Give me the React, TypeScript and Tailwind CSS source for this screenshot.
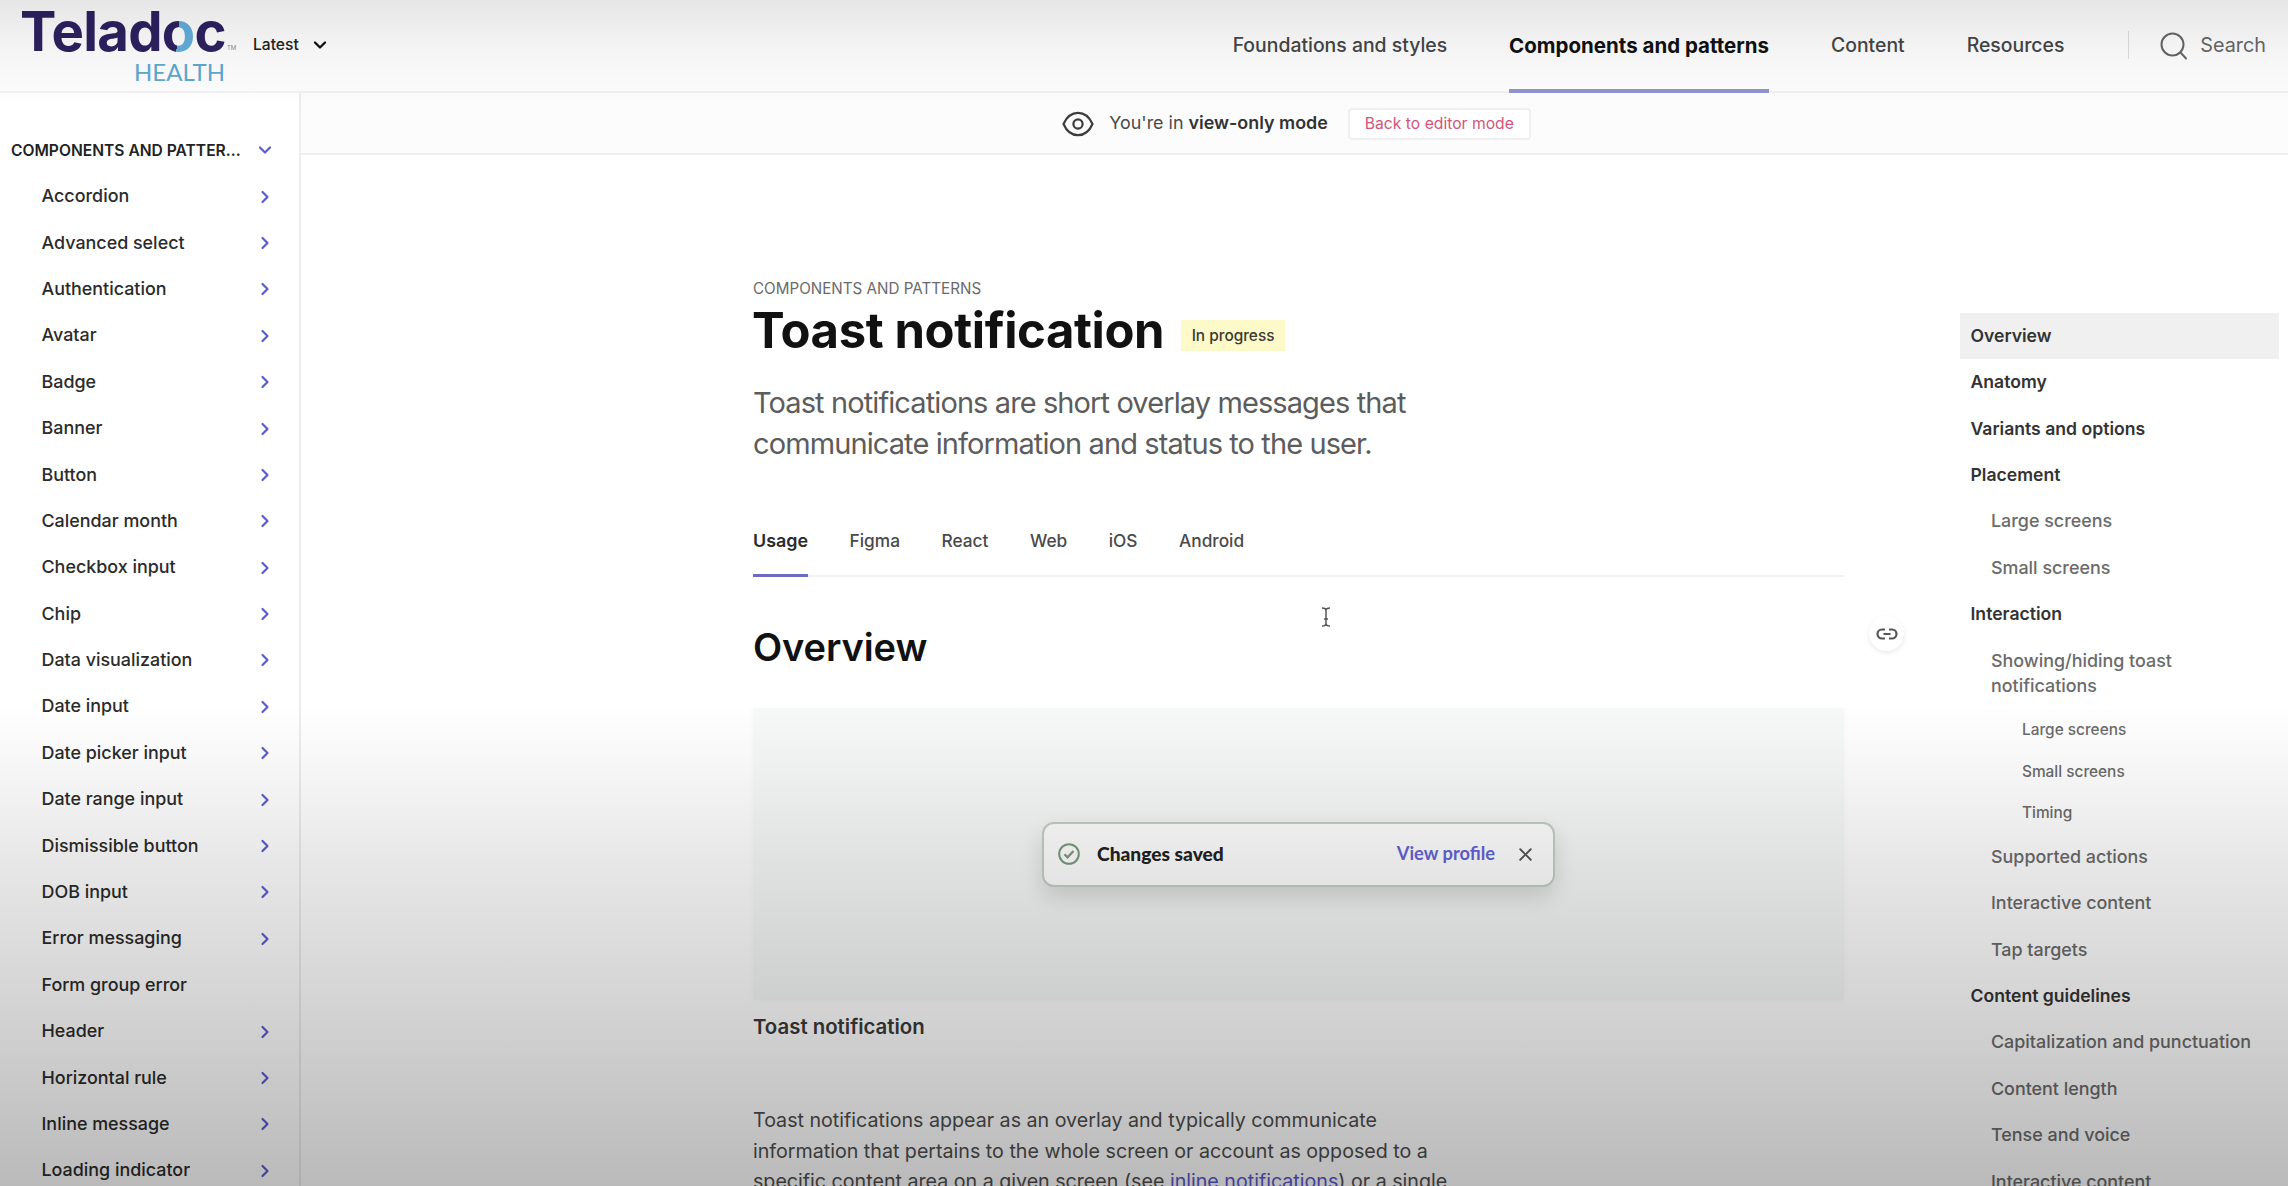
import { ChevronDown, ChevronRight, X } from "lucide-react";

interface NavItem {
  label: string;
  expandable?: boolean;
}

interface TocItem {
  label: string;
  level: 1 | 2 | 3;
}

const sidebarItems: NavItem[] = [
  { label: "Accordion", expandable: true },
  { label: "Advanced select", expandable: true },
  { label: "Authentication", expandable: true },
  { label: "Avatar", expandable: true },
  { label: "Badge", expandable: true },
  { label: "Banner", expandable: true },
  { label: "Button", expandable: true },
  { label: "Calendar month", expandable: true },
  { label: "Checkbox input", expandable: true },
  { label: "Chip", expandable: true },
  { label: "Data visualization", expandable: true },
  { label: "Date input", expandable: true },
  { label: "Date picker input", expandable: true },
  { label: "Date range input", expandable: true },
  { label: "Dismissible button", expandable: true },
  { label: "DOB input", expandable: true },
  { label: "Error messaging", expandable: true },
  { label: "Form group error" },
  { label: "Header", expandable: true },
  { label: "Horizontal rule", expandable: true },
  { label: "Inline message", expandable: true },
  { label: "Loading indicator", expandable: true },
];

const tocItems: TocItem[] = [
  { label: "Overview", level: 1 },
  { label: "Anatomy", level: 1 },
  { label: "Variants and options", level: 1 },
  { label: "Placement", level: 1 },
  { label: "Large screens", level: 2 },
  { label: "Small screens", level: 2 },
  { label: "Interaction", level: 1 },
  { label: "Showing/hiding toast notifications", level: 2 },
  { label: "Large screens", level: 3 },
  { label: "Small screens", level: 3 },
  { label: "Timing", level: 3 },
  { label: "Supported actions", level: 2 },
  { label: "Interactive content", level: 2 },
  { label: "Tap targets", level: 2 },
  { label: "Content guidelines", level: 1 },
  { label: "Capitalization and punctuation", level: 2 },
  { label: "Content length", level: 2 },
  { label: "Tense and voice", level: 2 },
  { label: "Interactive content", level: 2 },
];

const tocStyles: Record<TocItem["level"], string> = {
  1: "pl-[10.5px] py-[10.35px] text-[17.6px] font-semibold text-[#333]",
  2: "pl-[31px] py-[10.35px] text-[17.9px] font-medium text-[#6b6b6b]",
  3: "pl-[62px] py-[7.85px] text-[15.4px] font-medium text-[#6b6b6b]",
};

const topNav = ["Foundations and styles", "Components and patterns", "Content", "Resources"];
const tabs = ["Usage", "Figma", "React", "Web", "iOS", "Android"];

function Logo() {
  return (
    <div className="ml-[20px] w-[218px] shrink-0">
      <div className="flex items-end pt-px">
        <span className="text-[54.5px] leading-[60px] font-bold tracking-[-0.7px] whitespace-nowrap text-[#2d2160]">
          Telad
          <span className="bg-[linear-gradient(95deg,#2d2160_49%,#62aedb_49%)] bg-clip-text text-transparent">o</span>
          c
        </span>
        <span className="mb-[10px] ml-px text-[6px] leading-none text-[#8d86ab]">TM</span>
      </div>
      <div className="ml-[114px] font-['Lato'] text-[24px] leading-[22px] text-[#5fa8cf]">HEALTH</div>
    </div>
  );
}

function Header() {
  return (
    <header className="flex h-[93px] shrink-0 border-b-2 border-[#f1f1f1] bg-[#fdfdfd]">
      <Logo />
      <button type="button" className="ml-[15px] flex h-[90px] items-center text-[15.6px] font-medium text-[#222]">
        Latest
        <ChevronDown className="ml-[11px] size-[20px] text-[#111]" strokeWidth={2.8} />
      </button>
      <nav className="ml-auto flex gap-[62px]">
        {topNav.map((label) => {
          const isActive = label === "Components and patterns";
          return (
            <a
              key={label}
              className={`flex h-[93px] items-center border-b-4 pt-[3px] ${
                isActive
                  ? "border-[#8f93cc] text-[20.5px] font-bold text-[#111]"
                  : "border-transparent text-[19.4px] font-medium text-[#454545]"
              }`}
            >
              {label}
            </a>
          );
        })}
      </nav>
      <div className="mt-[31px] ml-[64px] h-[28px] w-px bg-[#dcdcdc]" />
      <div className="mr-[22px] ml-[31px] flex h-[92px] items-center gap-[12px] text-[19.8px] text-[#666]">
        <svg viewBox="0 0 28 28" className="size-[28px]" fill="none" stroke="currentColor" strokeWidth="2">
          <circle cx="12.5" cy="12.5" r="11" />
          <path d="M20.5 20.5 26 26.5" strokeLinecap="round" />
        </svg>
        Search
      </div>
    </header>
  );
}

function Sidebar() {
  return (
    <aside className="w-[301px] shrink-0 border-r-2 border-[#ececec] pt-[34px]">
      <div className="flex h-[46.4px] items-center justify-between pr-[24px] pl-[11px] text-[15.6px] font-semibold text-[#222]">
        COMPONENTS AND PATTER...
        <ChevronDown className="size-[20px] text-[#5b5bd0]" strokeWidth={2.6} />
      </div>
      <ul>
        {sidebarItems.map(({ label, expandable }) => (
          <li
            key={label}
            className="flex h-[46.4px] items-center justify-between pr-[24px] pl-[41.5px] text-[17.9px] font-medium text-[#2b2b2b]"
          >
            {label}
            {expandable && <ChevronRight className="size-[20px] text-[#5b5bd0]" strokeWidth={2.6} />}
          </li>
        ))}
      </ul>
    </aside>
  );
}

function ViewOnlyBar() {
  return (
    <div className="flex h-[62px] shrink-0 items-center justify-center border-b-2 border-[#efefef] bg-[#fcfcfd] pt-px pl-[4px]">
      <svg viewBox="0 0 32 26" className="mr-[15px] h-[26px] w-[32px]" fill="none" stroke="#3d3d3d" strokeWidth="2.2">
        <path d="M1.5 13C4.5 6 9.5 1.8 16 1.8S27.5 6 30.5 13C27.5 20 22.5 24.2 16 24.2S4.5 20 1.5 13Z" />
        <circle cx="16" cy="13" r="4.6" />
      </svg>
      <p className="text-[17.9px] text-[#4a4a4a]">
        You're in <span className="font-semibold text-[#333]">view-only mode</span>
      </p>
      <button
        type="button"
        className="ml-[20px] h-[32px] rounded-[4px] border-2 border-[#efefef] bg-white px-[15px] text-[15.7px] text-[#d1557a]"
      >
        Back to editor mode
      </button>
    </div>
  );
}

function Toast() {
  return (
    <div className="flex h-[65px] w-[513px] items-center rounded-[12px] border-2 border-[#c3cfc4] bg-white pr-[17px] pl-[14px] font-['Lato'] font-bold shadow-[0_10px_22px_rgba(0,0,0,0.13)]">
      <svg viewBox="0 0 22 22" className="size-[22px]" fill="none" stroke="#7b9a7e" strokeWidth="2">
        <circle cx="11" cy="11" r="9.8" />
        <path d="m6.5 11.3 3 3 6-6.3" strokeWidth="2.3" />
      </svg>
      <span className="ml-[17px] text-[19.2px] font-black text-[#222]">Changes saved</span>
      <span className="ml-auto text-[18.3px] text-[#6563d8]">View profile</span>
      <X className="ml-[20px] size-[21px] text-[#555]" strokeWidth={2.2} />
    </div>
  );
}

function Article() {
  return (
    <article className="ml-[452px] w-[1091px] shrink-0 pt-[122px]">
      <p className="text-[15.2px] leading-[24px] text-[#6a6a6a]">COMPONENTS AND PATTERNS</p>
      <div className="mt-[2px] flex items-center">
        <h1 className="-ml-px text-[49px] leading-[56px] font-bold tracking-[-0.4px] text-[#111]">
          Toast notification
        </h1>
        <span className="mt-[9px] ml-[17px] flex h-[31px] items-center bg-[#fdf9c9] px-[10.5px] text-[15.4px] font-medium text-[#3a3a30]">
          In progress
        </span>
      </div>
      <p className="mt-[23px] w-[680px] text-[29px] leading-[41px] tracking-[-0.9px] text-[#5c5c5c]">
        Toast notifications are short overlay messages that communicate information and status to the user.
      </p>

      <div className="mt-[47px] flex h-[66px] gap-[41.5px] border-b-2 border-[#f2f2f2]">
        {tabs.map((tab) => (
          <button
            key={tab}
            type="button"
            className={`flex h-[66px] items-center border-b-[3px] pb-[3px] ${
              tab === "Usage"
                ? "border-[#6c6cc4] text-[17.9px] font-semibold text-[#2b2b2b]"
                : "border-transparent text-[17.3px] font-medium text-[#4a4a4a]"
            }`}
          >
            {tab}
          </button>
        ))}
      </div>

      <div className="mt-[46px] flex h-[48px] w-[1151px] items-start justify-between">
        <h2 className="text-[38px] leading-[48px] font-semibold tracking-[-0.1px] text-[#111]">Overview</h2>
        <button
          type="button"
          className="mt-[-7px] flex size-[35px] items-center justify-center rounded-full bg-white shadow-[0_2px_5px_rgba(0,0,0,0.09)]"
        >
          <svg viewBox="0 0 22 12" className="h-[12px] w-[22px]" fill="none" stroke="#555" strokeWidth="2.2">
            <path d="M9 1.5H6a4.5 4.5 0 0 0 0 9h3M13 1.500h3a4.5 4.5 0 0 1 0 9h-3M7.5 6h7" />
          </svg>
        </button>
      </div>

      <div className="mt-[37px] flex h-[292px] items-center justify-center bg-[#f7f8f8] shadow-[0_0_7px_#f7f8f8]">
        <Toast />
      </div>
      <p className="mt-[13px] text-[20.4px] leading-[28px] font-semibold text-[#3a3a3a]">Toast notification</p>
      <p className="mt-[64px] w-[720px] text-[19.65px] leading-[30.7px] text-[#4d4d4d]">
        Toast notifications appear as an overlay and typically communicate
        <br />
        information that pertains to the whole screen or account as opposed to a
        <br />
        specific content area on a given screen (see{" "}
        <a className="text-[#5a58c8] underline underline-offset-4">inline notifications</a>) or a single
      </p>
    </article>
  );
}

function TableOfContents() {
  return (
    <ul className="mt-[157.5px] ml-[116px] w-[319px] shrink-0">
      {tocItems.map(({ label, level }, index) => (
        <li
          key={index}
          className={`pr-[20px] leading-[25.7px] ${tocStyles[level]} ${index === 0 ? "bg-[#f0f0f0]" : ""}`}
        >
          {label}
        </li>
      ))}
    </ul>
  );
}

export default function App() {
  return (
    <div className="relative flex h-[1186px] w-[2288px] flex-col overflow-hidden bg-white font-['Inter',sans-serif]">
      <Header />
      <div className="flex min-h-0 flex-1">
        <Sidebar />
        <main className="flex min-w-0 flex-1 flex-col">
          <ViewOnlyBar />
          <div className="flex min-h-0 flex-1">
            <Article />
            <TableOfContents />
          </div>
        </main>
      </div>

      {/* text cursor */}
      <svg
        viewBox="0 0 10 20"
        className="absolute top-[607px] left-[1321px] h-[20px] w-[10px]"
        fill="none"
        stroke="#555"
        strokeWidth="1.5"
      >
        <path d="M1 1c2.5 0 4 .8 4 2.5v13c0 1.7-1.5 2.5-4 2.5M9 1C6.5 1 5 1.8 5 3.5M9 19c-2.5 0-4-.8-4-2.5M3 12h4" />
      </svg>

      {/* shading at the top and bottom edges */}
      <div className="pointer-events-none absolute inset-x-0 top-0 h-[110px] bg-linear-to-b from-black/9 via-black/3 to-transparent" />
      <div className="pointer-events-none absolute inset-x-0 bottom-0 h-[482px] bg-[linear-gradient(to_bottom,transparent_0%,rgba(0,0,0,0.03)_12%,rgba(0,0,0,0.085)_30%,rgba(0,0,0,0.165)_60%,rgba(0,0,0,0.27)_100%)]" />
    </div>
  );
}
